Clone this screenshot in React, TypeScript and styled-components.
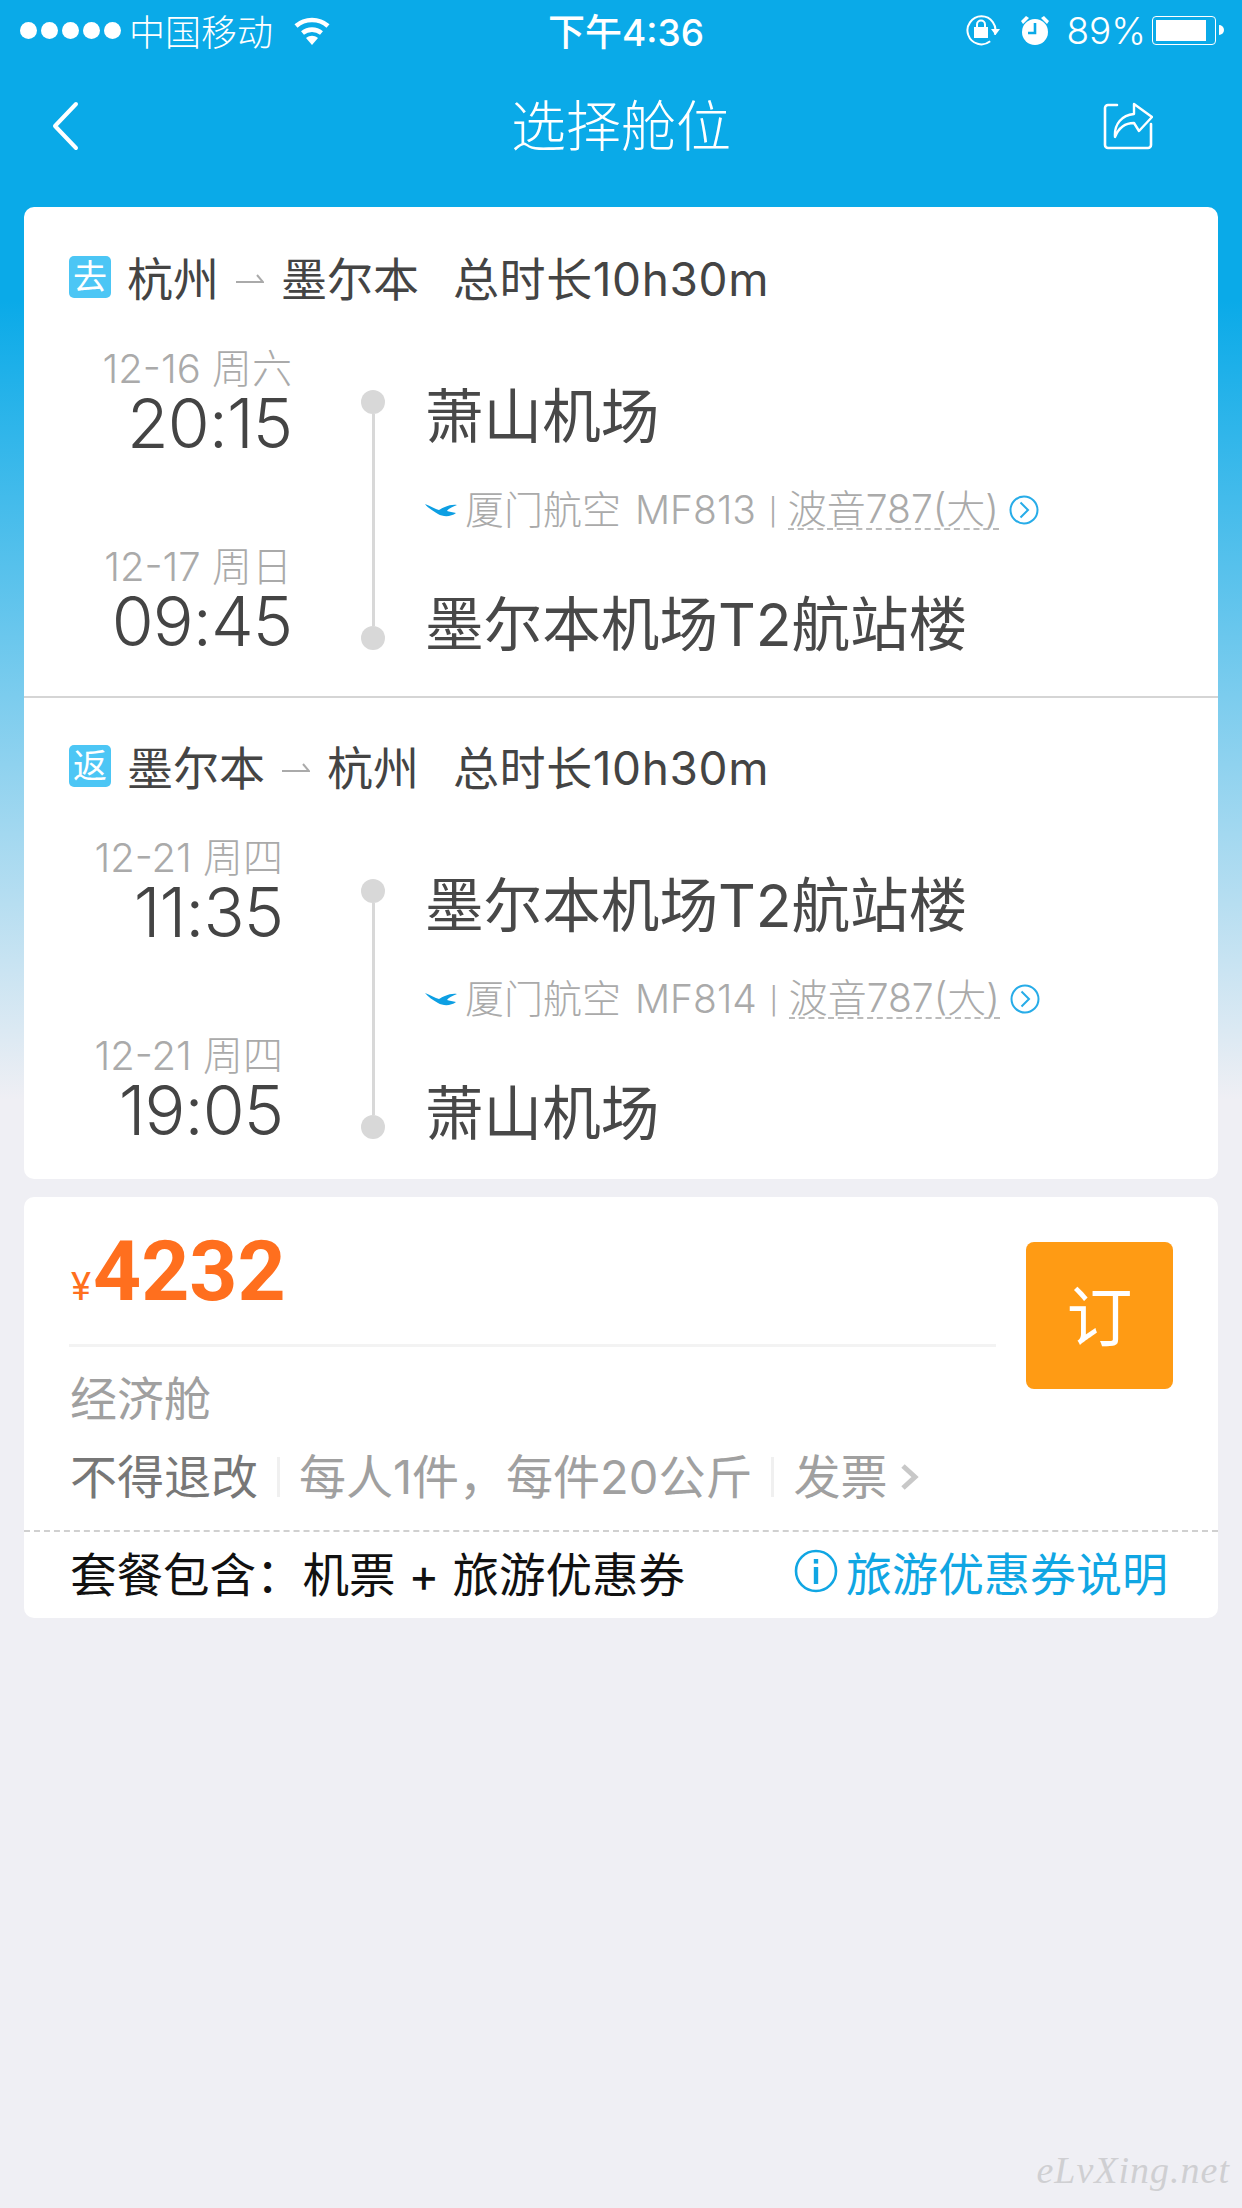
import styled, { createGlobalStyle } from 'styled-components';

const GlobalStyle = createGlobalStyle`
  html, body {
    margin: 0;
    padding: 0;
    background: #efeff4;
  }
  * {
    box-sizing: border-box;
  }
  body {
    font-family: Inter, "Noto Sans CJK SC", sans-serif;
    font-weight: 400;
  }
`;

const legs = [
  {
    badge: '去',
    from: '杭州',
    to: '墨尔本',
    inset: 69,
    flight: 'MF813',
    depart: { date: '12-16 周六', time: '20:15', airport: '萧山机场' },
    arrive: { date: '12-17 周日', time: '09:45', airport: '墨尔本机场T2航站楼' },
  },
  {
    badge: '返',
    from: '墨尔本',
    to: '杭州',
    inset: 78,
    flight: 'MF814',
    depart: { date: '12-21 周四', time: '11:35', airport: '墨尔本机场T2航站楼' },
    arrive: { date: '12-21 周四', time: '19:05', airport: '萧山机场' },
  },
];

export default function App() {
  return (
    <Page>
      <GlobalStyle />
      <StatusBar>
        <StatusLeft>
          <Signal>
            {[0, 1, 2, 3, 4].map((i) => (
              <i key={i} />
            ))}
          </Signal>
          <span>中国移动</span>
          <WifiIcon />
        </StatusLeft>
        <StatusTime>下午4:36</StatusTime>
        <StatusRight>
          <RotationLockIcon />
          <AlarmIcon />
          <span>89%</span>
          <Battery>
            <BatteryFill />
          </Battery>
          <BatteryNub />
        </StatusRight>
      </StatusBar>

      <NavBar>
        <NavSide>
          <svg width="30" height="50" viewBox="0 0 30 50" fill="none">
            <path d="M26 3 L5 25 L26 47" stroke="#fff" strokeWidth="4" strokeLinecap="round" strokeLinejoin="round" />
          </svg>
        </NavSide>
        <NavTitle>选择舱位</NavTitle>
        <NavSide $end>
          <ShareIcon />
        </NavSide>
      </NavBar>

      <Card>
        {legs.map((leg, index) => (
          <Leg key={leg.badge} $last={index === legs.length - 1}>
            <RouteRow>
              <Badge>{leg.badge}</Badge>
              <span>{leg.from}</span>
              <RouteArrow />
              <span>{leg.to}</span>
              <Duration>总时长10h30m</Duration>
            </RouteRow>
            <Schedule>
              <TimeColumn $inset={leg.inset}>
                <TimeBlock>
                  <DateText>{leg.depart.date}</DateText>
                  <TimeText>{leg.depart.time}</TimeText>
                </TimeBlock>
                <TimeBlock>
                  <DateText>{leg.arrive.date}</DateText>
                  <TimeText>{leg.arrive.time}</TimeText>
                </TimeBlock>
              </TimeColumn>
              <Timeline>
                <Dot />
                <Line />
                <Dot />
              </Timeline>
              <AirportColumn>
                <Airport>{leg.depart.airport}</Airport>
                <FlightRow>
                  <BirdIcon />
                  <FlightText>厦门航空 {leg.flight}</FlightText>
                  <FlightSep>|</FlightSep>
                  <PlaneType>波音787(大)</PlaneType>
                  <CircleChevron />
                </FlightRow>
                <Airport $second>{leg.arrive.airport}</Airport>
              </AirportColumn>
            </Schedule>
          </Leg>
        ))}
      </Card>

      <OfferCard>
        <OfferTop>
          <OfferMain>
            <PriceRow>
              <Yen>¥</Yen>
              <Price>4232</Price>
            </PriceRow>
            <CabinName>经济舱</CabinName>
          </OfferMain>
          <BookButton>订</BookButton>
        </OfferTop>
        <PolicyRow>
          <PolicyStrong>不得退改</PolicyStrong>
          <PolicySep />
          <span>每人1件，每件20公斤</span>
          <PolicySep />
          <span>发票</span>
          <svg width="20" height="28" viewBox="0 0 20 28" fill="none" style={{ marginLeft: 13 }}>
            <path d="M3 3 L15 14 L3 25" stroke="#c8c8c8" strokeWidth="5" />
          </svg>
        </PolicyRow>
        <PackageRow>
          <PackageText>套餐包含：机票 + 旅游优惠券</PackageText>
          <InfoLink>
            <InfoIcon />
            <span>旅游优惠券说明</span>
          </InfoLink>
        </PackageRow>
      </OfferCard>

      <Watermark>eLvXing.net</Watermark>
    </Page>
  );
}

const WifiIcon = () => (
  <svg width="38" height="30" viewBox="0 0 38 30" fill="none" style={{ marginLeft: 20 }}>
    <path d="M3 11 C12 3 26 3 35 11" stroke="#fff" strokeWidth="4.6" />
    <path d="M9.5 18 C15 13.5 23 13.5 28.5 18" stroke="#fff" strokeWidth="4.6" />
    <path d="M13 23 C17 20 21 20 25 23 L19 30 Z" fill="#fff" />
  </svg>
);

const RotationLockIcon = () => (
  <svg width="36" height="32" viewBox="0 0 36 32" fill="none">
    <path d="M30 20 A14 14 0 1 1 30 12" stroke="#fff" strokeWidth="2" transform="rotate(35 16 16)" />
    <rect x="9" y="13" width="14" height="11" fill="#fff" />
    <path d="M12 14 V10.5 A4 4 0 0 1 20 10.5 V14" stroke="#fff" strokeWidth="2" />
    <path d="M26 15 H35 L30.5 21 Z" fill="#fff" />
  </svg>
);

const AlarmIcon = () => (
  <svg width="32" height="32" viewBox="0 0 32 32" style={{ marginLeft: 18 }}>
    <circle cx="16" cy="18" r="13" fill="#fff" />
    <path d="M2 7 L7 2 L10 4 L4 10 Z M30 7 L25 2 L22 4 L28 10 Z" fill="#fff" />
    <path d="M16 9 V19 H9" stroke="#0aaae8" strokeWidth="2.6" fill="none" />
  </svg>
);

const ShareIcon = () => (
  <svg width="50" height="48" viewBox="0 0 50 48" fill="none">
    <path
      d="M14 3 H5 A3 3 0 0 0 2 6 V43 A3 3 0 0 0 5 46 H45 A3 3 0 0 0 48 43 V22"
      stroke="#fff"
      strokeWidth="2.6"
      strokeLinecap="round"
    />
    <path
      d="M12 35 C11 22 19 13 31 12 V2 L49 15 L36 29 L31 21 C23 21 16 25 12 35 Z"
      stroke="#fff"
      strokeWidth="2.4"
      strokeLinejoin="round"
    />
  </svg>
);

const RouteArrow = () => (
  <svg width="28" height="12" viewBox="0 0 28 12" style={{ margin: '0 17px 0 17px' }}>
    <path d="M0 9 H27 L21 2" stroke="#aaa" strokeWidth="2" fill="none" />
  </svg>
);

const BirdIcon = () => (
  <svg width="32" height="16" viewBox="0 0 32 16" style={{ marginRight: 8 }}>
    <path
      d="M0 2 C6 4 10 7 14 8 C18 6 24 2 32 3 C27 5 23 7 22 9 C24 10 28 10 31 11 C26 15 18 15 13 12 C8 9 3 6 0 2 Z"
      fill="#0d9fe3"
    />
  </svg>
);

const CircleChevron = () => (
  <svg width="30" height="30" viewBox="0 0 30 30" fill="none" style={{ marginLeft: 10 }}>
    <circle cx="15" cy="15" r="13.5" stroke="#27ace8" strokeWidth="2" />
    <path d="M11.5 7.5 L19 15 L11.5 22.5" stroke="#27ace8" strokeWidth="2" />
  </svg>
);

const InfoIcon = () => (
  <svg width="44" height="44" viewBox="0 0 44 44" fill="none">
    <circle cx="22" cy="22" r="20" stroke="#10a6e3" strokeWidth="2.6" />
    <rect x="19.8" y="18" width="4.4" height="17" fill="#10a6e3" />
    <rect x="19.8" y="10" width="4.4" height="4.6" fill="#10a6e3" />
  </svg>
);

const Page = styled.div`
  position: relative;
  width: 1242px;
  height: 2208px;
  overflow: hidden;
  background: linear-gradient(180deg, #0aaae8 0, #0aaae8 300px, #efeff4 1100px);
`;

const StatusBar = styled.div`
  display: grid;
  grid-template-columns: 1fr auto 1fr;
  align-items: center;
  height: 60px;
  padding: 0 18px 0 20px;
  color: #fff;
  font-size: 36px;
  font-weight: 300;
`;

const StatusLeft = styled.div`
  display: flex;
  align-items: center;
`;

const Signal = styled.div`
  display: flex;
  gap: 4px;
  margin-right: 8px;

  i {
    width: 17px;
    height: 17px;
    border-radius: 50%;
    background: #fff;
  }
`;

const StatusTime = styled.div`
  margin-left: 8px;
  font-size: 37px;
  font-weight: 500;
`;

const StatusRight = styled.div`
  display: flex;
  align-items: center;
  justify-content: flex-end;

  span {
    margin: 0 6px 0 15px;
    font-size: 37px;
  }
`;

const Battery = styled.div`
  width: 64px;
  height: 29px;
  padding: 3px;
  border: 1.5px solid #fff;
  border-radius: 4px;
`;

const BatteryFill = styled.div`
  width: 89%;
  height: 100%;
  background: #fff;
`;

const BatteryNub = styled.div`
  width: 5px;
  height: 10px;
  margin-left: 3px;
  border-radius: 0 5px 5px 0;
  background: #fff;
`;

const NavBar = styled.div`
  display: grid;
  grid-template-columns: 1fr auto 1fr;
  align-items: center;
  height: 147px;
  padding: 0 50px 16px;
`;

const NavSide = styled.div<{ $end?: boolean }>`
  display: flex;
  justify-content: ${(p) => (p.$end ? 'flex-end' : 'flex-start')};
  padding-right: ${(p) => (p.$end ? 39 : 0)}px;
`;

const NavTitle = styled.div`
  color: #fff;
  font-size: 55px;
  font-weight: 300;
  line-height: 64px;
`;

const Card = styled.div`
  margin: 0 24px;
  border-radius: 10px;
  background: #fff;
`;

const Leg = styled.div<{ $last?: boolean }>`
  height: ${(p) => (p.$last ? 481 : 491)}px;
  padding-top: ${(p) => (p.$last ? 46 : 48)}px;
  border-bottom: ${(p) => (p.$last ? 'none' : '2px solid #d5d5d5')};
`;

const RouteRow = styled.div`
  display: flex;
  align-items: center;
  height: 48px;
  padding-left: 45px;
  color: #444;
  font-size: 46px;
  line-height: 48px;
`;

const Badge = styled.div`
  display: flex;
  align-items: center;
  justify-content: center;
  width: 42px;
  height: 42px;
  margin: -4px 16px 0 0;
  border-radius: 5px;
  background: #4cc6f5;
  color: #fff;
  font-size: 34px;
  line-height: 42px;
`;

const Duration = styled.span`
  margin-left: 34px;
  letter-spacing: 0.6px;
`;

const Schedule = styled.div`
  display: grid;
  grid-template-columns: 337px 24px 1fr;
  margin-top: 46px;
  height: 306px;
`;

const TimeColumn = styled.div<{ $inset: number }>`
  display: flex;
  flex-direction: column;
  justify-content: space-between;
  padding-right: ${(p) => p.$inset}px;
  text-align: right;
`;

const TimeBlock = styled.div`
  height: 108px;
`;

const DateText = styled.div`
  color: #aaa;
  font-size: 40px;
  font-weight: 300;
  line-height: 40px;
`;

const TimeText = styled.div`
  color: #444;
  font-size: 68px;
  font-weight: 350;
  letter-spacing: -1px;
  line-height: 68px;
`;

const Timeline = styled.div`
  display: flex;
  flex-direction: column;
  align-items: center;
  padding: 41px 0 5px;
`;

const Dot = styled.div`
  flex: none;
  width: 24px;
  height: 24px;
  border-radius: 50%;
  background: #d8d8d8;
`;

const Line = styled.div`
  flex: 1;
  width: 3px;
  background: #d8d8d8;
`;

const AirportColumn = styled.div`
  padding: 39px 0 0 40px;
`;

const Airport = styled.div<{ $second?: boolean }>`
  margin-top: ${(p) => (p.$second ? 66 : 0)}px;
  color: #484848;
  font-size: 58.6px;
  line-height: 58px;
  white-space: nowrap;
`;

const FlightRow = styled.div`
  display: flex;
  align-items: center;
  height: 40px;
  margin-top: 44px;
  color: #aaa;
  font-size: 39px;
  font-weight: 300;
  line-height: 40px;
  white-space: pre;
`;

const FlightText = styled.span`
  word-spacing: 3px;
`;

const FlightSep = styled.span`
  margin: 0 11px 0 13px;
  font-family: Roboto, sans-serif;
  font-size: 36px;
`;

const PlaneType = styled.span`
  border-bottom: 2px dashed #bbb;
  line-height: 38px;
`;

const OfferCard = styled.div`
  height: 421px;
  margin: 18px 24px 0;
  padding-top: 45px;
  border-radius: 10px;
  background: #fff;
`;

const OfferTop = styled.div`
  display: flex;
  align-items: flex-start;
  justify-content: space-between;
  padding: 0 45px;
`;

const OfferMain = styled.div`
  width: 927px;
`;

const PriceRow = styled.div`
  display: flex;
  align-items: baseline;
  height: 105px;
  padding-left: 2px;
  border-bottom: 3px solid #f3f3f3;
  font-family: Roboto, sans-serif;
  line-height: 60px;
`;

const Yen = styled.span`
  color: #ff6f1e;
  font-size: 38px;
`;

const Price = styled.span`
  margin-left: 2px;
  color: #ff6f1e;
  font-size: 84px;
  font-weight: 700;
`;

const CabinName = styled.div`
  margin-top: 28px;
  padding-left: 1px;
  color: #a0a0a0;
  font-size: 47px;
  line-height: 47px;
`;

const BookButton = styled.div`
  display: flex;
  align-items: center;
  justify-content: center;
  width: 147px;
  height: 147px;
  padding-bottom: 8px;
  border-radius: 8px;
  background: #ff9b14;
  color: #fff;
  font-size: 66px;
`;

const PolicyRow = styled.div`
  display: flex;
  align-items: center;
  height: 47px;
  margin: 31px 0 30px;
  padding-left: 46px;
  color: #a0a0a0;
  font-size: 47px;
  line-height: 47px;
`;

const PolicyStrong = styled.span`
  color: #777;
`;

const PolicySep = styled.i`
  width: 3px;
  height: 40px;
  margin: 0 19px;
  background: #f0f0f0;
`;

const PackageRow = styled.div`
  display: flex;
  align-items: center;
  justify-content: space-between;
  height: 88px;
  padding: 0 50px 8px 46px;
  border-top: 2px dashed #d0d0d0;
`;

const PackageText = styled.span`
  color: #111;
  font-size: 46.5px;
`;

const InfoLink = styled.div`
  display: flex;
  align-items: center;
  gap: 8px;
  color: #10a6e3;
  font-size: 46px;
`;

const Watermark = styled.div`
  position: absolute;
  right: 12px;
  bottom: 16px;
  color: #cfcfd2;
  font-family: "Liberation Serif", serif;
  font-size: 38px;
  font-style: italic;
  letter-spacing: 1px;
`;
